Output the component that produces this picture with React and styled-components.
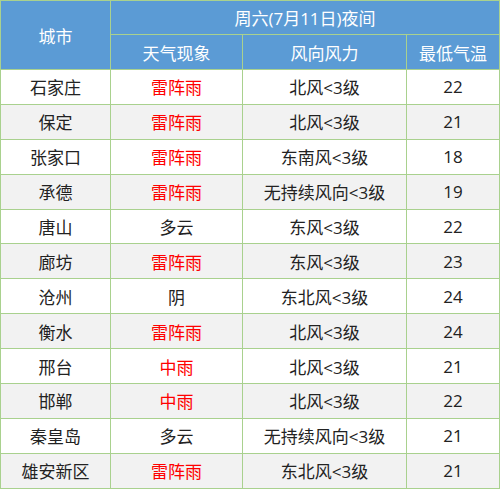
import React from "react";
import styled, { createGlobalStyle } from "styled-components";

const Global = createGlobalStyle`
  html, body { margin: 0; padding: 0; background: #ffffff; }
  body { font-family: "Noto Sans CJK SC", "Noto Sans", sans-serif; }
`;

const Table = styled.table`
  width: 499px;
  border-collapse: collapse;
  table-layout: fixed;
  font-size: 17px;
  font-family: "Open Sans", "Noto Sans CJK SC", sans-serif;
`;

const HeadCell = styled.th`
  background: #5b9bd5;
  color: #ffffff;
  font-weight: normal;
  border: 1px solid #a9d18e;
  height: ${(p) => p.$h}px;
  padding: 0;
  text-align: center;
  vertical-align: middle;
`;

const Row = styled.tr`
  background: ${(p) => (p.$alt ? "#f2f2f2" : "#ffffff")};
`;

const Cell = styled.td`
  border: 1px solid #a9d18e;
  height: 33.9px;
  padding: 0;
  text-align: center;
  vertical-align: middle;
  color: ${(p) => (p.$red ? "#ff0000" : "#222222")};
  white-space: nowrap;
`;

const rows = [
  ["石家庄", "雷阵雨", "北风<3级", "22"],
  ["保定", "雷阵雨", "北风<3级", "21"],
  ["张家口", "雷阵雨", "东南风<3级", "18"],
  ["承德", "雷阵雨", "无持续风向<3级", "19"],
  ["唐山", "多云", "东风<3级", "22"],
  ["廊坊", "雷阵雨", "东风<3级", "23"],
  ["沧州", "阴", "东北风<3级", "24"],
  ["衡水", "雷阵雨", "北风<3级", "24"],
  ["邢台", "中雨", "北风<3级", "21"],
  ["邯郸", "中雨", "北风<3级", "22"],
  ["秦皇岛", "多云", "无持续风向<3级", "21"],
  ["雄安新区", "雷阵雨", "东北风<3级", "21"],
];

const isRed = (w) => w === "雷阵雨" || w === "中雨";

export default function App() {
  return (
    <>
      <Global />
      <Table>
        <colgroup>
          <col style={{ width: 110 }} />
          <col style={{ width: 132 }} />
          <col style={{ width: 164 }} />
          <col style={{ width: 93 }} />
        </colgroup>
        <thead>
          <tr>
            <HeadCell rowSpan={2} $h={33}>城市</HeadCell>
            <HeadCell colSpan={3} $h={33}>周六(7月11日)夜间</HeadCell>
          </tr>
          <tr>
            <HeadCell $h={34}>天气现象</HeadCell>
            <HeadCell $h={34}>风向风力</HeadCell>
            <HeadCell $h={34}>最低气温</HeadCell>
          </tr>
        </thead>
        <tbody>
          {rows.map((r, i) => (
            <Row key={r[0]} $alt={i % 2 === 1}>
              <Cell>{r[0]}</Cell>
              <Cell $red={isRed(r[1])}>{r[1]}</Cell>
              <Cell>{r[2]}</Cell>
              <Cell>{r[3]}</Cell>
            </Row>
          ))}
        </tbody>
      </Table>
    </>
  );
}
